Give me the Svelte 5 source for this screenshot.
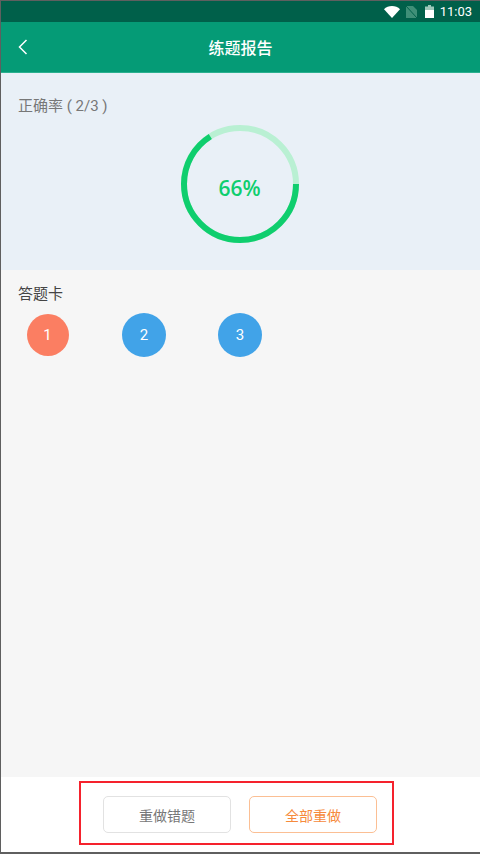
<script lang="ts">
  const correct = 2;
  const total = 3;
  const percent = Math.floor((correct / total) * 100);
  const radius = 56;
  const circumference = 2 * Math.PI * radius;
  const dash = (percent / 100) * circumference;

  // wrong answers are red, right ones blue
  const answers = [
    { no: 1, ok: false },
    { no: 2, ok: true },
    { no: 3, ok: true },
  ];
</script>

<div class="page">
  <div class="status">
    <svg class="wifi" width="16" height="12" viewBox="0 0 16 12">
      <path d="M0 3.2C2 1.2 5 0 8 0s6 1.200 8 3.200L8 12z" fill="#fff" />
    </svg>
    <svg class="sim" width="11" height="12" viewBox="0 0 11 12">
      <path d="M0 0h7l4 4v8H0z" fill="#3f8f78" />
      <path d="M0 0l11 12" stroke="#00604a" stroke-width="1" />
    </svg>
    <svg class="battery" width="9" height="13" viewBox="0 0 9 13">
      <path d="M3 0h3v1.500h3V5H0V1.500h3z" fill="#9cc7ba" />
      <path d="M0 5h9v8H0z" fill="#fff" />
    </svg>
    <span class="time">11:03</span>
  </div>

  <header>
    <button class="back" aria-label="返回">
      <svg width="10" height="16" viewBox="0 0 10 16">
        <path d="M8.500 1L1.500 8l7 7" fill="none" stroke="#fff" stroke-width="1.500" />
      </svg>
    </button>
    <h1>练题报告</h1>
  </header>

  <section class="report">
    <div class="rate">正确率 ( {correct}/{total} )</div>
    <div class="ring">
      <svg width="118" height="118" viewBox="0 0 118 118">
        <circle cx="59" cy="59" r={radius} fill="none" stroke="#b9f0d3" stroke-width="6" />
        <circle
          cx="59"
          cy="59"
          r={radius}
          fill="none"
          stroke="#0fce6e"
          stroke-width="6"
          stroke-dasharray="{dash} {circumference}"
        />
      </svg>
      <span class="percent">{percent}%</span>
    </div>
  </section>

  <section class="card">
    <div class="card-title">答题卡</div>
    <div class="answers">
      {#each answers as a}
        <div class="cell">
          <span class="dot" class:wrong={!a.ok}>{a.no}</span>
        </div>
      {/each}
    </div>
  </section>

  <footer>
    <div class="actions">
      <button class="btn">重做错题</button>
      <button class="btn orange">全部重做</button>
    </div>
  </footer>
</div>

<style>
  :global(body) {
    margin: 0;
    font-family: Roboto, "Noto Sans CJK SC", sans-serif;
  }

  .page {
    box-sizing: border-box;
    width: 480px;
    height: 854px;
    display: flex;
    flex-direction: column;
    background: #fff;
    border-left: 1px solid #5f5f5f;
    border-top: 1px solid #5f5f5f;
    border-bottom: 2px solid #5f5f5f;
  }

  .status {
    height: 21px;
    flex: none;
    background: #00604a;
    display: flex;
    align-items: center;
    justify-content: flex-end;
    padding-right: 8px;
  }

  .wifi {
    margin-right: 6px;
  }

  .sim {
    margin-right: 8px;
  }

  .battery {
    margin-right: 6px;
  }

  .time {
    color: #fff;
    font-size: 13px;
    font-weight: 400;
  }

  header {
    flex: none;
    box-sizing: content-box;
    height: 49px;
    padding-bottom: 1px;
    background: #059b76;
    border-bottom: 1px solid #2bb08f;
    display: flex;
    align-items: center;
    justify-content: center;
    position: relative;
  }

  .back {
    position: absolute;
    left: 17px;
    top: 17px;
    padding: 0;
    border: none;
    background: none;
    display: flex;
  }

  h1 {
    margin: 0;
    color: #fff;
    font-size: 16px;
    font-weight: 500;
  }

  .report {
    flex: none;
    height: 197px;
    background: #e9f0f7;
    box-sizing: border-box;
    padding: 23px 17px 0;
  }

  .rate {
    color: #777;
    font-size: 15px;
    line-height: 20px;
  }

  .ring {
    position: relative;
    width: 118px;
    height: 118px;
    margin: 9px auto 0;
    left: -1px;
  }

  .ring svg {
    display: block;
  }

  .percent {
    position: absolute;
    inset: 7px 0 0;
    display: flex;
    align-items: center;
    justify-content: center;
    color: #0fce6e;
    font-family: "Open Sans", sans-serif;
    font-size: 21px;
    font-weight: 600;
  }

  .card {
    flex: 1;
    background: #f6f6f6;
    padding: 14px 17px 0;
  }

  .card-title {
    color: #444;
    font-size: 15px;
    line-height: 20px;
  }

  .answers {
    display: flex;
    margin-top: 9px;
  }

  .cell {
    width: 96px;
    display: flex;
    justify-content: center;
    margin-left: -18px;
    margin-right: 18px;
  }

  .cell:first-child {
    margin-left: -18.500px;
    margin-right: 18.500px;
  }

  .dot {
    width: 44px;
    height: 44px;
    border-radius: 50%;
    background: #41a3e8;
    color: #fff;
    font-size: 15px;
    display: flex;
    align-items: center;
    justify-content: center;
  }

  .dot.wrong {
    width: 42px;
    height: 42px;
    margin-top: 1px;
    background: #fb7e62;
  }

  footer {
    flex: none;
    height: 75px;
    background: #fff;
    display: flex;
    justify-content: flex-start;
    padding: 4px 0 0 78px;
    box-sizing: border-box;
  }

  .actions {
    box-sizing: border-box;
    width: 315px;
    height: 64px;
    padding: 3px 14px 0 22px;
    border: 2px solid #f5222d;
    display: flex;
    align-items: center;
    gap: 18px;
  }

  .btn {
    width: 128px;
    height: 37px;
    flex: none;
    background: #fff;
    border: 1px solid #e2e2e2;
    border-radius: 5px;
    color: #777;
    font-family: inherit;
    font-size: 14px;
    padding: 0;
  }

  .btn.orange {
    border-color: #fbbf94;
    color: #f68a3c;
  }
</style>
